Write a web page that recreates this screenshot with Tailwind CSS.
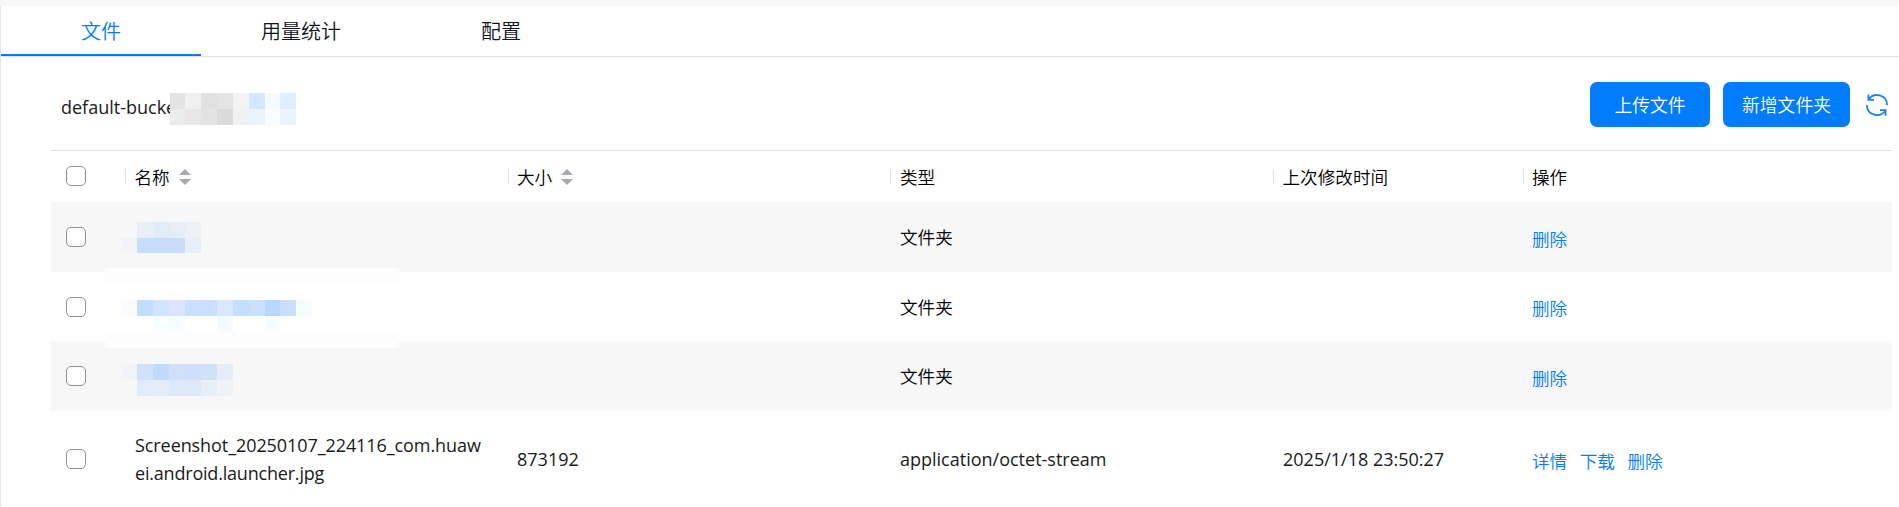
<!DOCTYPE html>
<html lang="zh-CN">
<head>
<meta charset="utf-8">
<title>文件</title>
<script src="https://cdn.jsdelivr.net/npm/@tailwindcss/browser@4"></script>
</head>
<body class="h-[507px] overflow-hidden bg-[#f7f7f7] pt-[6px] font-['Open_Sans','Noto_Sans_CJK_SC',sans-serif] text-[17.6px] leading-7 font-[350] text-black">
<main class="flex h-[501px] flex-col border-l border-[#e5e5e5] bg-white">
  <nav class="flex h-[51px] shrink-0 border-b border-[#dfe1e6] text-[20px] text-[#10131c]">
    <a class="flex h-[50px] w-[200px] items-center justify-center border-b-2 border-[#007dff] pt-[3px] text-[#007dff]">文件</a>
    <a class="flex h-[50px] w-[200px] items-center justify-center pt-px">用量统计</a>
    <a class="flex h-[50px] w-[200px] items-center justify-center pt-px">配置</a>
  </nav>
  <header class="flex h-[93px] shrink-0 items-start pr-[11px] pl-[60px]">
    <div class="relative mt-[36px] w-[240px] text-[18px] font-normal text-[#191919]">default-bucket
      <div class="absolute top-0 left-[109px] grid grid-cols-[15px_16px_16px_16px_16px_16px_15px_16px] grid-rows-[16px_16px]">
        <i class="bg-[#e3e3e3]"></i><i class="bg-[#f0f0f0]"></i><i class="bg-[#e1e1e1]"></i><i class="bg-[#e4e4e4]"></i><i class="bg-[#f3f3f3]"></i><i class="bg-[#d3e8ff]"></i><i class="bg-[#f4faff]"></i><i class="bg-[#deeeff]"></i>
        <i class="bg-[#eaecec]"></i><i class="bg-[#e9e7e5]"></i><i class="bg-[#e3e3e3]"></i><i class="bg-[#dadad8]"></i><i class="bg-[#f1f1f1]"></i><i class="bg-[#e9f4ff]"></i><i class="bg-[#fafcff]"></i><i class="bg-[#e9f4ff]"></i>
      </div>
    </div>
    <div class="mt-[25px] ml-auto flex items-center">
      <button class="h-[45px] w-[120px] rounded-[7px] bg-[#007dff] text-[17.8px] text-white">上传文件</button>
      <button class="ml-[13px] h-[45px] w-[127px] rounded-[7px] bg-[#007dff] text-[17.8px] text-white">新增文件夹</button>
      <svg class="ml-4 h-6 w-[22px]" viewBox="0 0 22 24" fill="none" stroke="#1684fc" stroke-width="1.8"><path d="M2.4 1.4V6.9H8M2.6 6.4C8-1.2 21 1.5 21.1 12.2M19.6 22.7V17.1H14M19.4 17.8C14 25.2 1 22.6.9 12"/></svg>
    </div>
  </header>
  <section class="ml-[50px] w-[1841px]">
    <div class="grid h-[52px] grid-cols-[74px_383px_382px_383px_250px_369px] items-center border-t border-[#dfdfdf]">
      <div class="pb-px pl-[15px]"><span class="block size-5 rounded-[5px] border border-[#8d9198] bg-white"></span></div>
      <div class="flex items-center"><span class="mr-[8.5px] h-[15px] w-px bg-[#dfe1e6]"></span>名称<svg class="ml-[9px] h-4 w-3" viewBox="0 0 12 16" fill="#a6a9b0"><path d="M6 0L12 6H0ZM0 10H12L6 16Z"/></svg></div>
      <div class="flex items-center"><span class="mr-[8px] h-[15px] w-px bg-[#dfe1e6]"></span>大小<svg class="ml-[9px] h-4 w-3" viewBox="0 0 12 16" fill="#a6a9b0"><path d="M6 0L12 6H0ZM0 10H12L6 16Z"/></svg></div>
      <div class="flex items-center"><span class="mr-[9px] h-[15px] w-px bg-[#dfe1e6]"></span>类型</div>
      <div class="flex items-center"><span class="mr-[8.5px] h-[15px] w-px bg-[#dfe1e6]"></span>上次修改时间</div>
      <div class="flex items-center"><span class="mr-[8px] h-[15px] w-px bg-[#dfe1e6]"></span>操作</div>
    </div>
    <div class="grid h-[70px] grid-cols-[74px_383px_382px_383px_250px_369px] items-center bg-[#f7f7f7]">
      <div class="pl-[15px]"><span class="block size-5 rounded-[5px] border border-[#8d9198] bg-white"></span></div>
      <div class="-ml-1 grid grid-cols-[16px_16px_16px_16px_16px] grid-rows-[16px_15px]">
        <i class="bg-[#f6f8f7]"></i><i class="bg-[#e9eef8]"></i><i class="bg-[#e2ebf8]"></i><i class="bg-[#e8eef7]"></i><i class="bg-[#ebf1f5]"></i>
        <i class="bg-[#f1f3f7]"></i><i class="bg-[#c7ddf9]"></i><i class="bg-[#c9ddf8]"></i><i class="bg-[#c9ddf8]"></i><i class="bg-[#e6eef9]"></i>
      </div>
      <div></div>
      <div class="pl-[10px]">文件夹</div>
      <div></div>
      <div class="pt-[3px] pl-[9px] text-[#007dff]">删除</div>
    </div>
    <div class="relative grid h-[69px] grid-cols-[74px_383px_382px_383px_250px_369px] items-center">
      <div class="absolute top-[-4px] left-[54px] h-20 w-[294px] border-y-[16px] border-[#fdfdfd] bg-white"></div>
      <div class="relative pl-[15px]"><span class="block size-5 rounded-[5px] border border-[#8d9198] bg-white"></span></div>
      <div class="relative -ml-1 grid grid-cols-[16px_16px_16px_16px_16px_16px_16px_16px_16px_15px_16px_16px] grid-rows-[16px_16px] pt-[19px]">
        <i class="bg-[#fafaff]"></i><i class="bg-[#c2deff]"></i><i class="bg-[#cee4ff]"></i><i class="bg-[#dbe5ff]"></i><i class="bg-[#c9dfff]"></i><i class="bg-[#cadfff]"></i><i class="bg-[#d8e9ff]"></i><i class="bg-[#c4deff]"></i><i class="bg-[#cbe0ff]"></i><i class="bg-[#b8d9ff]"></i><i class="bg-[#c7deff]"></i><i class="bg-[#f7fcff]"></i>
        <i></i><i></i><i class="bg-[#fafdff]"></i><i class="bg-[#f7fdff]"></i><i></i><i></i><i class="bg-[#f5faff]"></i><i></i><i></i><i class="bg-[#f6fcff]"></i><i></i><i></i>
      </div>
      <div></div>
      <div class="pl-[10px]">文件夹</div>
      <div></div>
      <div class="pt-[3px] pl-[9px] text-[#007dff]">删除</div>
    </div>
    <div class="relative grid h-[70px] grid-cols-[74px_383px_382px_383px_250px_369px] items-center bg-[#f7f7f7]">
      <div class="absolute top-0 left-[54px] h-[7px] w-[294px] bg-[#fdfdfd]"></div>
      <div class="pl-[15px]"><span class="block size-5 rounded-[5px] border border-[#8d9198] bg-white"></span></div>
      <div class="-ml-1 grid grid-cols-[16px_16px_16px_16px_16px_16px_16px] grid-rows-[16px_16px] pt-2">
        <i class="bg-[#f1f3f7]"></i><i class="bg-[#d0e1fa]"></i><i class="bg-[#c2dafa]"></i><i class="bg-[#cee1f9]"></i><i class="bg-[#cddffa]"></i><i class="bg-[#d0e2f8]"></i><i class="bg-[#e4edf7]"></i>
        <i></i><i class="bg-[#e2ecf8]"></i><i class="bg-[#e4ecf8]"></i><i class="bg-[#dbe9f8]"></i><i class="bg-[#dce9f8]"></i><i class="bg-[#e5eef9]"></i><i class="bg-[#eef3f7]"></i>
      </div>
      <div></div>
      <div class="pl-[10px]">文件夹</div>
      <div></div>
      <div class="pt-[3px] pl-[9px] text-[#007dff]">删除</div>
    </div>
    <div class="grid h-[96px] grid-cols-[74px_383px_382px_383px_250px_369px] items-center text-[18px] font-normal text-[#191919]">
      <div class="pl-[15px]"><span class="block size-5 rounded-[5px] border border-[#8d9198] bg-white"></span></div>
      <div class="pl-[10px] tracking-[-0.08px]">Screenshot_20250107_224116_com.huaw<br><span class="tracking-[-0.2px]">ei.android.launcher.jpg</span></div>
      <div class="pl-[9px]">873192</div>
      <div class="pl-[10px]">application/octet-stream</div>
      <div class="pl-[10px]">2025/1/18 23:50:27</div>
      <div class="flex gap-[12.5px] pt-[3px] pl-[9px] text-[17.6px] font-[350] text-[#007dff]"><a>详情</a><a>下载</a><a>删除</a></div>
    </div>
  </section>
</main>
</body>
</html>
